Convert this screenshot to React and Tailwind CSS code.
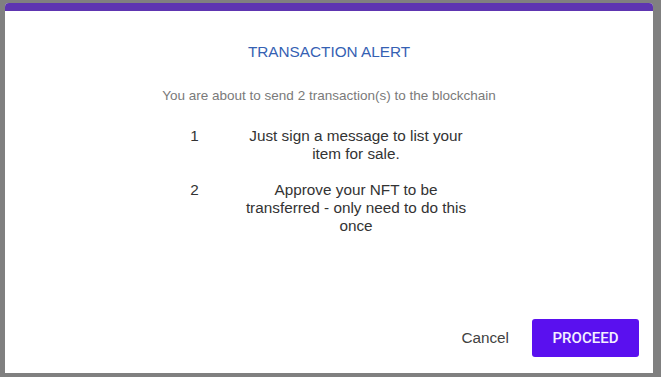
export default function App() {
  return (
    <div className="w-[661px] h-[377px] bg-[#808080] pt-[3px] pl-[5px] overflow-hidden" style={{ fontFamily: '"Liberation Sans", Arial, sans-serif' }}>
      <div className="w-[648px] h-[370px] bg-white rounded-t-[4px] overflow-hidden flex flex-col">
        <div className="h-[8px] bg-[#5e35b1] shrink-0" />
        <div className="pt-[31px] text-center text-[15.3px] leading-[20px] text-[#3561b3]">TRANSACTION ALERT</div>
        <div className="mt-[26px] text-center text-[13.5px] leading-[16px] text-[#7a7a7a]">You are about to send 2 transaction(s) to the blockchain</div>
        <div className="mt-[23px] flex flex-col gap-[18px] text-[15.3px] leading-[18px] text-[#333333]">
          <div className="flex ml-[165px]">
            <div className="w-[49px] text-center">1</div>
            <div className="ml-[22px] w-[230px] text-center">Just sign a message to list your item for sale.</div>
          </div>
          <div className="flex ml-[165px]">
            <div className="w-[49px] text-center">2</div>
            <div className="ml-[22px] w-[230px] text-center">Approve your NFT to be transferred - only need to do this once</div>
          </div>
        </div>
        <div className="mt-auto flex items-center justify-end pr-[14px] pb-[16px]">
          <button className="text-[15.3px] text-[#424242] mr-[23px]">Cancel</button>
          <button className="w-[107px] h-[38px] rounded-[3px] bg-[#5a10ef] text-[#f4f0ff] text-[15px] font-medium font-['Roboto',sans-serif]">PROCEED</button>
        </div>
      </div>
    </div>
  );
}
